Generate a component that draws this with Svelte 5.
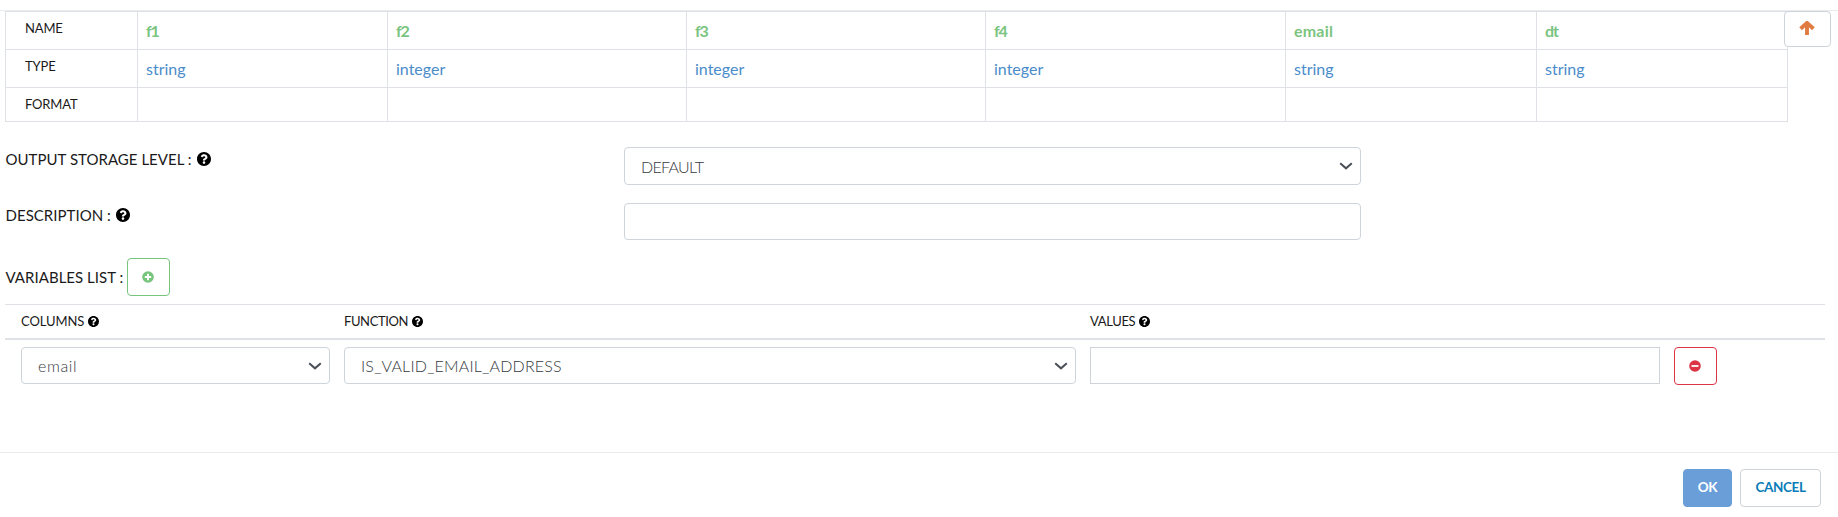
<script>
  const fields = [
    { name: 'f1', type: 'string' },
    { name: 'f2', type: 'integer' },
    { name: 'f3', type: 'integer' },
    { name: 'f4', type: 'integer' },
    { name: 'email', type: 'string' },
    { name: 'dt', type: 'string' }
  ];
</script>

{#snippet help()}
  <svg class="help" viewBox="8 8 496 496" aria-hidden="true"><path d="M504 256c0 136.997-111.043 248-248 248S8 392.997 8 256C8 119.083 119.043 8 256 8s248 111.083 248 248zM262.655 90c-54.497 0-89.255 22.957-116.549 63.758-3.536 5.286-2.353 12.415 2.715 16.258l34.699 26.31c5.205 3.947 12.621 3.008 16.665-2.122 17.864-22.658 30.113-35.797 57.303-35.797 20.429 0 45.698 13.148 45.698 32.958 0 14.976-12.363 22.667-32.534 33.976C247.128 238.528 216 254.941 216 296v4c0 6.627 5.373 12 12 12h56c6.627 0 12-5.373 12-12v-1.333c0-28.462 83.186-29.647 83.186-106.667 0-58.002-60.165-102-116.531-102zM256 338c-25.365 0-46 20.635-46 46 0 25.364 20.635 46 46 46s46-20.636 46-46c0-25.364-20.635-46-46-46z" /></svg>
{/snippet}

{#snippet chevron()}
  <svg class="chevron" viewBox="0 0 14 8" aria-hidden="true"><path d="M1.2 1.2 7 6.3l5.8-5.1" /></svg>
{/snippet}

<main class="dialog">
  <section class="body">
    <div class="schema">
      <div class="label">NAME</div>
      {#each fields as f}<div class="name" class:short={f.name.length === 2}>{f.name}</div>{/each}
      <div class="label">TYPE</div>
      {#each fields as f}<div class="type">{f.type}</div>{/each}
      <div class="label">FORMAT</div>
      {#each fields as f}<div></div>{/each}
    </div>
    <button class="top" aria-label="Up">
      <svg viewBox="0 0 16 14" aria-hidden="true"><path d="M1.6 7.8 8 1.9l6.4 5.9M8 2.8V14" /></svg>
    </button>

    <div class="row storage">
      <span class="caption"><span>OUTPUT STORAGE LEVEL :</span>{@render help()}</span>
      <div class="control select"><span class="default">DEFAULT</span>{@render chevron()}</div>
    </div>
    <div class="row description">
      <span class="caption"><span>DESCRIPTION :</span>{@render help()}</span>
      <input class="control" aria-label="Description" />
    </div>
    <div class="variables">
      <span class="caption"><span class="vars">VARIABLES LIST :</span></span>
      <button class="square add" aria-label="Add">
        <svg viewBox="0 0 12 12" aria-hidden="true"><circle cx="6" cy="6" r="5.8" /><path d="M2.8 6h6.4M6 2.8v6.4" /></svg>
      </button>
    </div>

    <div class="list">
      <div class="grid head">
        <span><span>COLUMNS</span>{@render help()}</span>
        <span><span class="function">FUNCTION</span>{@render help()}</span>
        <span><span class="values">VALUES</span>{@render help()}</span>
      </div>
      <div class="grid item">
        <div class="control select"><span class="email">email</span>{@render chevron()}</div>
        <div class="control select"><span class="fn">IS_VALID_EMAIL_ADDRESS</span>{@render chevron()}</div>
        <input class="control plain" aria-label="Values" />
        <button class="square remove" aria-label="Remove">
          <svg viewBox="0 0 12 12" aria-hidden="true"><circle cx="6" cy="6" r="5.8" /><path d="M2.5 6h7" /></svg>
        </button>
      </div>
    </div>
  </section>
  <footer>
    <button class="ok">OK</button>
    <button class="cancel">CANCEL</button>
  </footer>
</main>

<style>
  :global(body) { background: #fff; overflow: hidden; }
  * { box-sizing: border-box; }
  .dialog {
    display: flex; flex-direction: column; width: 1838px; height: 517px; padding-top: 10px;
    font-family: Lato, "Liberation Sans", sans-serif; color: #1a1a1a;
  }
  .body { position: relative; height: 442px; border-top: 1px solid #e9ecef; padding-left: 5px; }
  button, input { font: inherit; margin: 0; padding: 0; background: #fff; }
  svg { display: block; flex: none; }

  .schema {
    display: grid; width: 1783px;
    grid-template-columns: 132px 250px 299px 299px 300px 251px 251px;
    grid-template-rows: 38px 38px 34px;
    border-left: 1px solid #dee2e6; border-top: 1px solid #dee2e6;
    margin-bottom: 25px;
  }
  .schema > div { border-right: 1px solid #dee2e6; border-bottom: 1px solid #dee2e6; }
  .schema .label { padding: 8px 0 0 19px; font-size: 13px; line-height: 16px; letter-spacing: -.15px; }
  .schema .name { padding: 8px 0 0 8px; font-size: 16px; line-height: 22px; font-weight: 700; letter-spacing: .2px; color: #7bc47f; }
  .schema .short { letter-spacing: -1.2px; }
  .schema .type { padding: 8px 0 0 8px; font-size: 16px; line-height: 22px; color: #4a8ccb; }

  .top {
    position: absolute; left: 1784px; top: 0; width: 47px; height: 36px;
    border: 1px solid #ced4da; border-radius: 4px; display: flex; justify-content: center; padding-top: 9px;
  }
  .top svg { width: 16px; height: 14px; fill: none; stroke: #e07c42; stroke-width: 3.9; position: relative; left: -.5px; }

  .row { display: grid; grid-template-columns: 619px 737px; align-items: start; }
  .caption { display: flex; align-items: center; font-size: 15px; line-height: 22px; gap: 5px; letter-spacing: .03px; padding-left: .5px; }
  .caption .help { width: 14px; height: 14px; }
  .storage { height: 56px; }
  .storage .caption { margin-top: 1px; }
  .storage .control { height: 38px; }
  .description { height: 55px; }
  .description .caption { margin-top: 1px; }
  .control {
    height: 37px; width: 100%; border: 1px solid #ced4da; border-radius: 4px;
    display: flex; justify-content: space-between; align-items: center;
    padding: 0 7px 0 16px; font-size: 16px; font-weight: 300; color: #343a40;
  }
  .default { letter-spacing: -.7px; }
  .email { letter-spacing: .6px; }
  .fn { letter-spacing: .2px; }
  .plain { border-radius: 0; }
  .chevron { width: 14px; height: 8px; fill: none; stroke: #495057; stroke-width: 2; }

  .variables { display: flex; height: 46px; gap: 5px; }
  .variables .caption { height: 37px; width: 117px; white-space: nowrap; }
  .square { width: 43px; height: 38px; border: 1px solid; border-radius: 4px; display: flex; align-items: center; justify-content: center; }
  .square svg { width: 12px; height: 12px; fill: currentColor; position: relative; left: -.5px; }
  .square path { stroke: #fff; stroke-width: 1.8; }
  .add { color: #77c47d; }
  .remove { color: #dc3545; }

  .list { width: 1820px; }
  .grid { display: grid; grid-template-columns: 309px 732px 570px 43px; column-gap: 14px; padding-left: 16px; }
  .head { height: 36px; border-top: 1px solid #dee2e6; border-bottom: 2px solid #dee2e6; font-size: 13px; line-height: 16px; padding-top: 8px; }
  .head > span { display: flex; align-items: center; gap: 4px; height: 16px; letter-spacing: -.1px; }
  .head .help { width: 11px; height: 11px; }
  .head .function { letter-spacing: -.4px; }
  .head .values { letter-spacing: -.35px; }
  .item { padding-top: 7px; }

  footer { height: 65px; border-top: 1px solid #e9ecef; display: flex; justify-content: flex-end; gap: 8px; padding: 16px 17px 0 0; }
  footer button { height: 38px; border-radius: 4px; font-size: 13.5px; font-weight: 700; letter-spacing: -.4px; padding-bottom: 2px; }
  .ok { width: 49px; border: 1px solid #6a9ed9; background: #6a9ed9; color: #fff; }
  .cancel { width: 81px; border: 1px solid #ced4da; color: #0a7cb8; }
</style>
